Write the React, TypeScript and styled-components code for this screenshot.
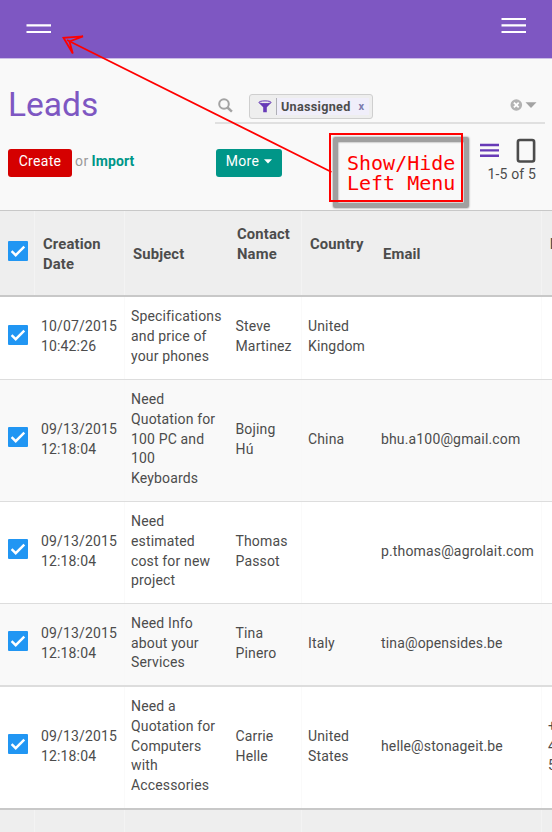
import React from "react";
import styled, { createGlobalStyle } from "styled-components";

const GlobalStyle = createGlobalStyle`
  * { box-sizing: border-box; }
  body {
    margin: 0;
    background: #f9f9f9;
    color: #4c4c4c;
    font-family: Roboto, "Liberation Sans", sans-serif;
    font-size: 14px;
    letter-spacing: 0.15px;
    overflow: hidden;
  }
`;

const Page = styled.div`
  position: relative;
  width: 552px;
  height: 832px;
  overflow: hidden;
`;

const TopBar = styled.header`
  display: flex;
  justify-content: space-between;
  align-items: flex-start;
  height: 59px;
  padding: 17px 26px 0;
  background: #7e57c2;
  border-bottom: 1px solid #cbbce6;
`;

const BarButton = styled.button`
  display: flex;
  padding: 0;
  border: 0;
  background: none;
`;

const ControlPanel = styled.section`
  display: grid;
  grid-template-columns: 207px 330px;
  grid-template-rows: 65px 86px;
  height: 151px;
  padding-left: 8px;
`;

const Title = styled.h1`
  margin: 26px 0 0;
  font-size: 33.5px;
  line-height: 40px;
  font-weight: 400;
  letter-spacing: 0;
  color: #7e57c2;
`;

const SearchBar = styled.div`
  display: flex;
  align-items: flex-start;
  height: 65px;
  padding: 35px 8px 0 3px;
  border-bottom: 2px solid #e0e0e0;
`;

const SearchIcon = styled.svg`
  margin: 4px 16px 0 0;
`;

const Facet = styled.div`
  display: flex;
  align-items: stretch;
  width: 124px;
  height: 25px;
  padding: 3px;
  border: 1px solid #cfcfcf;
  border-radius: 3px;
  background: #eeeeee;
`;

const FacetIcon = styled.span`
  display: flex;
  width: 23px;
  align-items: center;
  justify-content: center;
`;

const FacetLabel = styled.span`
  display: flex;
  flex: 1;
  align-items: center;
  padding-left: 4px;
  border-left: 1px solid #afafb6;
  background: #f0eefa;
  font-size: 12.6px;
  font-weight: 700;
  letter-spacing: 0.3px;
`;

const FacetRemove = styled.span`
  margin-left: 8px;
  color: #7c7bad;
  font-size: 11px;
`;

const SearchTools = styled.svg`
  margin: 5px 0 0 auto;
`;

const Actions = styled.div<{ $indent?: boolean }>`
  display: flex;
  align-items: flex-start;
  padding: 24.5px 0 0 ${(p) => (p.$indent ? 1 : 0)}px;
  line-height: 25px;
`;

const Button = styled.button<{ $color: string; $width: number }>`
  display: flex;
  align-items: center;
  justify-content: center;
  gap: 5px;
  width: ${(p) => p.$width}px;
  height: 28px;
  padding: 0 0 3px;
  border: 0;
  border-radius: 3px;
  background: ${(p) => p.$color};
  color: #fff;
  font: inherit;
  letter-spacing: 0.3px;
`;

const Or = styled.span`
  margin: 0 3px 0 3px;
  color: #999;
  letter-spacing: 0.4px;
`;

const ImportLink = styled.a`
  color: #009688;
  font-weight: 700;
  letter-spacing: 0.1px;
`;

const ViewControls = styled.div`
  display: flex;
  flex-direction: column;
  align-items: flex-end;
  margin-left: auto;
  padding: 0 9px 0 0;
  margin-top: -10.5px;
`;

const Pager = styled.span`
  margin-top: 0.5px;
  line-height: 20px;
`;

const Table = styled.div`
  border-top: 1px solid #c8c8c8;
`;

const Row = styled.div<{ $height: number; $tone: string; $line: string; $thick?: boolean }>`
  display: grid;
  grid-template-columns: 34px 90px 104px 73px 73px 167px 60px;
  height: ${(p) => p.$height}px;
  background: ${(p) => p.$tone};
  border-bottom: ${(p) => (p.$thick ? 2 : 1)}px solid ${(p) => p.$line};
`;

const Cell = styled.div<{ $edge?: boolean }>`
  display: flex;
  align-items: center;
  padding: 0 0 2px 6px;
  border-left: 1px solid ${(p) => (p.$edge ? "rgba(247, 247, 247, 0.6)" : "transparent")};
  line-height: 19.8px;
  white-space: pre;
`;

const ContactCell = styled(Cell)`
  padding-left: 6.5px;
`;

const HeadCell = styled(Cell)<{ $raise?: boolean }>`
  padding: ${(p) => (p.$raise ? 0 : 3)}px 0 ${(p) => (p.$raise ? 17 : 0)}px 8px;
  font-size: 14.8px;
  font-weight: 700;
  letter-spacing: 0.15px;
`;

const CheckCell = styled.div<{ $shift?: number }>`
  display: flex;
  align-items: center;
  padding: 0 0 ${(p) => p.$shift ?? 7}px 7.5px;
`;

const CheckBox = styled.span`
  display: flex;
  width: 20px;
  height: 20px;
  border-radius: 1px;
  background: #2196f3;
`;

const Note = styled.div`
  position: absolute;
  left: 329px;
  top: 133px;
  width: 134px;
  height: 69px;
  padding: 18px 0 0 16px;
  border: 2px solid #f00;
  color: #f00;
  font-family: "DejaVu Sans Mono", monospace;
  font-size: 20px;
  line-height: 20px;
  letter-spacing: 0;
  white-space: pre;
`;

const NoteShadow = styled.div`
  position: absolute;
  left: 333px;
  top: 137px;
  width: 136px;
  height: 71px;
  border: 5px solid #a0a0a0;
  border-radius: 2px;
  box-shadow: 0 0 2px #777, inset 0 0 2px #777;
`;

const Arrow = styled.svg`
  position: absolute;
  left: 0;
  top: 0;
  pointer-events: none;
`;

const Checked = ({ shift }: { shift?: number }) => (
  <CheckCell $shift={shift}>
    <CheckBox role="checkbox" aria-checked="true">
      <svg width="20" height="20" viewBox="0 0 20 20" fill="none" stroke="#fff" strokeWidth="2.4">
        <path d="M3.6 10.2 7.7 14.2 16.3 5.6" />
      </svg>
    </CheckBox>
  </CheckCell>
);

type Lead = {
  date: string;
  subject: string;
  contact: string;
  country: string;
  email: string;
  phone?: string;
  height: number;
  thick?: boolean;
};

const leads: Lead[] = [
  { date: "10/07/2015\n10:42:26", subject: "Specifications\nand price of\nyour phones", contact: "Steve\nMartinez", country: "United\nKingdom", email: "", height: 83 },
  { date: "09/13/2015\n12:18:04", subject: "Need\nQuotation for\n100 PC and\n100\nKeyboards", contact: "Bojing\nHú", country: "China", email: "bhu.a100@gmail.com", height: 122 },
  { date: "09/13/2015\n12:18:04", subject: "Need\nestimated\ncost for new\nproject", contact: "Thomas\nPassot", country: "", email: "p.thomas@agrolait.com", height: 102 },
  { date: "09/13/2015\n12:18:04", subject: "Need Info\nabout your\nServices", contact: "Tina\nPinero", country: "Italy", email: "tina@opensides.be", height: 83, thick: true },
  { date: "09/13/2015\n12:18:04", subject: "Need a\nQuotation for\nComputers\nwith\nAccessories", contact: "Carrie\nHelle", country: "United\nStates", email: "helle@stonageit.be", phone: "+1\n415\n555", height: 123, thick: true },
];

export default function App() {
  return (
    <Page>
      <GlobalStyle />
      <TopBar>
        <BarButton aria-label="Left menu">
          <svg width="26" height="17" stroke="#fff" strokeWidth="2.2">
            <path d="M.5 8.4H25M.5 15H25" />
          </svg>
        </BarButton>
        <BarButton aria-label="Main menu">
          <svg width="25" height="17" stroke="#fff" strokeWidth="2.2">
            <path d="M.5 2H25M.5 8.4H25M.5 15H25" />
          </svg>
        </BarButton>
      </TopBar>
      <ControlPanel>
        <Title>Leads</Title>
        <SearchBar>
          <SearchIcon width="15" height="15" viewBox="0 0 15 15" fill="none" stroke="#a3a3a3" strokeWidth="2">
            <circle cx="6" cy="6" r="4.8" />
            <path d="m9.5 9.5 4.4 4.1" strokeWidth="2.5" />
          </SearchIcon>
          <Facet>
            <FacetIcon>
              <svg width="14" height="13" viewBox="0 0 14 13">
                <path d="M.5 2.6 5.2 7.2V12.3H8.8V7.2L13.5 2.6Z" fill="#673ab7" />
                <ellipse cx="7" cy="2.3" rx="6" ry="1.4" fill="#eee" stroke="#673ab7" />
              </svg>
            </FacetIcon>
            <FacetLabel>
              Unassigned<FacetRemove>x</FacetRemove>
            </FacetLabel>
          </Facet>
          <SearchTools width="27" height="12" viewBox="0 0 27 12">
            <circle cx="6.3" cy="6" r="5.8" fill="#b3b3b3" />
            <path d="m3.9 3.6 4.8 4.8m0-4.8-4.8 4.8" stroke="#fff" strokeWidth="1.8" />
            <path d="M15.5 3.3H26.5L21 8.9Z" fill="#a3a3a3" />
          </SearchTools>
        </SearchBar>
        <Actions>
          <Button $color="#d50000" $width={64}>Create</Button>
          <Or>or</Or>
          <ImportLink>Import</ImportLink>
        </Actions>
        <Actions $indent>
          <Button $color="#009688" $width={66}>
            More
            <svg width="8" height="5" viewBox="0 0 8 5" fill="#fff"><path d="M0 .3H8L4 4.5Z" /></svg>
          </Button>
          <ViewControls>
            <svg width="56" height="25" viewBox="0 0 56 25">
              <path d="M0 7H19M0 12.4H19M0 17.7H19" stroke="#673ab7" strokeWidth="2.4" />
              <rect x="37.9" y="2" width="16.2" height="21.5" rx="2" fill="none" stroke="#4c4c4c" strokeWidth="2.6" />
            </svg>
            <Pager>1-5 of 5</Pager>
          </ViewControls>
        </Actions>
      </ControlPanel>
      <Table>
        <Row $height={86} $tone="#eeeeee" $line="#c8c8c8" $thick>
          <Checked shift={4} />
          <HeadCell $edge>{"Creation\nDate"}</HeadCell>
          <HeadCell $edge>Subject</HeadCell>
          <HeadCell $raise>{"Contact\nName"}</HeadCell>
          <HeadCell $edge $raise>Country</HeadCell>
          <HeadCell>Email</HeadCell>
          <HeadCell $edge $raise>Phone</HeadCell>
        </Row>
        {leads.map((lead, i) => (
          <Row key={i} $height={lead.height} $tone={i % 2 ? "#f9f9f9" : "#fff"} $line={i === 4 ? "#c8c8c8" : "#dddddd"} $thick={lead.thick}>
            <Checked />
            <Cell>{lead.date}</Cell>
            <Cell $edge>{lead.subject}</Cell>
            <ContactCell>{lead.contact}</ContactCell>
            <Cell $edge>{lead.country}</Cell>
            <Cell>{lead.email}</Cell>
            <Cell $edge>{lead.phone}</Cell>
          </Row>
        ))}
        <Row $height={30} $tone="#eeeeee" $line="#eeeeee">
          <Cell />
          <Cell $edge />
          <Cell $edge />
          <Cell />
          <Cell $edge />
          <Cell />
          <Cell $edge />
        </Row>
      </Table>
      <NoteShadow />
      <Note>{"Show/Hide\nLeft Menu"}</Note>
      <Arrow width="552" height="220" fill="none" stroke="#f00" strokeWidth="1.8">
        <path d="M331.5 172 67 40" />
        <path d="M83 36.3 63.5 37.8 72.8 53.5 69.5 41.5Z" />
      </Arrow>
    </Page>
  );
}
